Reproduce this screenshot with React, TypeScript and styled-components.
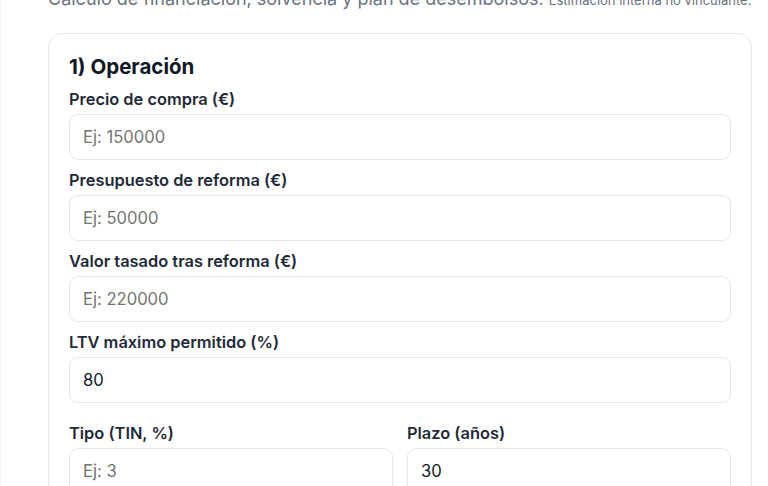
import styled, { createGlobalStyle } from 'styled-components';

const GlobalStyle = createGlobalStyle`
    html, body {
        margin: 0;
        padding: 0;
        background: #ffffff;
        overflow: hidden;
    }
    body {
        font-family: Inter, "Noto Sans", "Liberation Sans", sans-serif;
        color: #111827;
    }
`

const Page = styled.div`
    height: 486px;
    border-left: 1px solid #f3f4f6;
    padding: 0 16px 0 47px;
    overflow: hidden;
`

const Intro = styled.p`
    margin: -13px 0 0;
    white-space: nowrap;
    font-size: 18px;
    line-height: 24px;
    color: #6b7280;

    small {
        font-size: 13px;
        color: #6b7280;
    }
`

const Card = styled.section`
    margin-top: 21px;
    border: 1px solid #e5e7eb;
    border-radius: 14px;
    padding: 18px 20px 20px;
    display: flex;
    flex-direction: column;
    gap: 10px;
`

const Heading = styled.h2`
    margin: 1px 0 -2px;
    font-size: 20.5px;
    line-height: 28px;
    font-weight: 700;
    color: #111827;
`

const Field = styled.label`
    display: flex;
    flex-direction: column;
    gap: 5px;
`

const Label = styled.span`
    font-size: 16.4px;
    line-height: 20px;
    font-weight: 600;
    color: #1f2937;
`

const Input = styled.input`
    box-sizing: border-box;
    height: 46px;
    padding: 0 13px;
    border: 1px solid #e5e7eb;
    border-radius: 9px;
    font-family: inherit;
    font-size: 16.6px;
    color: #111827;
    background: #ffffff;
    outline: none;

    &::placeholder {
        color: #737373;
    }
`

const Row = styled.div`
    margin-top: 10px;
    display: grid;
    grid-template-columns: 1fr 1fr;
    gap: 14px;
`

interface IField {
    label: string;
    placeholder?: string;
    value?: string;
}

const fields: IField[] = [
    { label: 'Precio de compra (€)', placeholder: 'Ej: 150000' },
    { label: 'Presupuesto de reforma (€)', placeholder: 'Ej: 50000' },
    { label: 'Valor tasado tras reforma (€)', placeholder: 'Ej: 220000' },
    { label: 'LTV máximo permitido (%)', value: '80' },
];

const rowFields: IField[] = [
    { label: 'Tipo (TIN, %)', placeholder: 'Ej: 3' },
    { label: 'Plazo (años)', value: '30' },
];

function FormField({ label, placeholder, value }: IField) {
    return (
        <Field>
            <Label>{label}</Label>
            <Input type="text" placeholder={placeholder} defaultValue={value} />
        </Field>
    );
}

function App() {
    return (
        <>
            <GlobalStyle />
            <Page>
                <Intro>
                    Cálculo de financiación, solvencia y plan de desembolsos. <small>Estimación interna no vinculante.</small>
                </Intro>
                <Card>
                    <Heading>1) Operación</Heading>
                    {fields.map(f => <FormField key={f.label} {...f} />)}
                    <Row>
                        {rowFields.map(f => <FormField key={f.label} {...f} />)}
                    </Row>
                </Card>
            </Page>
        </>
    );
}

export default App;
